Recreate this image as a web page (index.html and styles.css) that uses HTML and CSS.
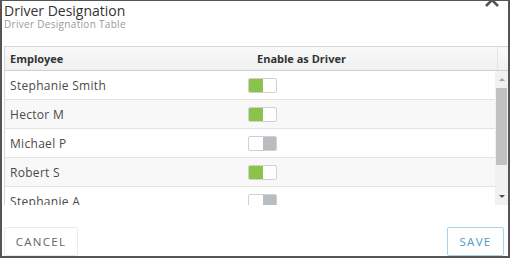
FILE: index.html
```html
<!DOCTYPE html>
<html lang="en">

<head>
    <meta charset="UTF-8">
    <meta name="viewport" content="width=device-width, initial-scale=1.0">
    <title>Driver Designation</title>
    <link rel="stylesheet" href="styles.css">
</head>

<body>
    <div class="modal">
        <button class="close" aria-label="Close">
            <svg width="16" height="16" viewBox="0 0 16 16">
                <path d="M2 2 L14 14 M14 2 L2 14" stroke="#555" stroke-width="2.6" fill="none" />
            </svg>
        </button>

        <div class="head">
            <div class="title">Driver Designation</div>
            <div class="subtitle">Driver Designation Table</div>
        </div>

        <div class="grid">
            <div class="grid-head">
                <div class="col-name">Employee</div>
                <div class="col-toggle">Enable as Driver</div>
                <div class="spacer"></div>
            </div>
            <div class="grid-body">
                <div class="rows">
                    <div class="row">
                        <div class="col-name">Stephanie Smith</div>
                        <div class="col-toggle"><span class="switch on"><i></i><i></i></span></div>
                    </div>
                    <div class="row alt">
                        <div class="col-name">Hector M</div>
                        <div class="col-toggle"><span class="switch on"><i></i><i></i></span></div>
                    </div>
                    <div class="row">
                        <div class="col-name">Michael P</div>
                        <div class="col-toggle"><span class="switch off"><i></i><i></i></span></div>
                    </div>
                    <div class="row alt">
                        <div class="col-name">Robert S</div>
                        <div class="col-toggle"><span class="switch on"><i></i><i></i></span></div>
                    </div>
                    <div class="row">
                        <div class="col-name">Stephanie A</div>
                        <div class="col-toggle"><span class="switch off"><i></i><i></i></span></div>
                    </div>
                </div>
                <div class="scrollbar">
                    <div class="arrow up"></div>
                    <div class="thumb"></div>
                    <div class="track"></div>
                    <div class="arrow down"></div>
                </div>
            </div>
        </div>

        <div class="footer">
            <button class="btn">CANCEL</button>
            <button class="btn save">SAVE</button>
        </div>
    </div>
</body>

</html>
```

FILE: styles.css
```css
body {
    margin: 0;
    padding: 0;
    font-family: "Open Sans", Arial, sans-serif;
    background-color: #fff;
}

.modal {
    position: relative;
    box-sizing: border-box;
    width: 510px;
    height: 258px;
    border: 2px solid #555;
    border-top-width: 1px;
    background-color: #fff;
    display: flex;
    flex-direction: column;
    overflow: hidden;
}

.close {
    position: absolute;
    top: -9px;
    right: 8px;
    padding: 0;
    border: 0;
    background: none;
    line-height: 0;
}

.head {
    padding: 1px 2px 0;
}

.title {
    font-size: 14px;
    line-height: 17px;
    color: #333;
}

.subtitle {
    font-size: 10px;
    line-height: 11px;
    letter-spacing: 0.3px;
    color: #9a9a9a;
}

.grid {
    margin: 16px 0 0 2px;
    border-top: 1px solid #d6d6d6;
    border-left: 1px solid #d6d6d6;
}

.grid-head {
    display: flex;
    height: 23px;
    align-items: center;
    border-bottom: 1px solid #cfcfcf;
    background: linear-gradient(#f9f9f9, #eef0f1);
    font-size: 11px;
    font-weight: bold;
    color: #333;
}

.col-name {
    box-sizing: border-box;
    width: 243px;
    padding-left: 5px;
}

.grid-head .col-toggle {
    flex: 1;
    padding-left: 9px;
}

.spacer {
    width: 10px;
    align-self: stretch;
    border-left: 1px solid #e2e4e5;
}

.grid-body {
    display: flex;
    height: 134px;
}

.rows {
    flex: 1;
    overflow: hidden;
}

.row {
    display: flex;
    align-items: center;
    height: 28px;
    border-bottom: 1px solid #e3e3e3;
    font-size: 12px;
    letter-spacing: 0.3px;
    color: #4a4a4a;
}

.row.alt {
    background-color: #f8f8f8;
}

.switch {
    display: flex;
    box-sizing: border-box;
    width: 29px;
    height: 15px;
    border: 1px solid #d0d0d0;
    border-radius: 2px;
    background-color: #fff;
    overflow: hidden;
}

.switch i {
    flex: 1;
}

.switch.on i:first-child {
    background-color: #8bc34a;
}

.switch.off i:last-child {
    background-color: #b7bdc1;
}

.scrollbar {
    width: 13px;
    display: flex;
    flex-direction: column;
    background-color: #f1f1f1;
}

.arrow {
    height: 17px;
    display: flex;
    align-items: center;
    justify-content: center;
}

.arrow::before {
    content: "";
    border-left: 3px solid transparent;
    border-right: 3px solid transparent;
}

.arrow.up::before {
    border-bottom: 3px solid #a3a3a3;
}

.arrow.down::before {
    border-top: 3px solid #505050;
}

.thumb {
    height: 77px;
    margin: 0 1px;
    background-color: #c1c1c1;
}

.track {
    flex: 1;
}

.footer {
    display: flex;
    justify-content: space-between;
    margin-top: 22px;
    padding: 0 4px 0 2px;
}

.btn {
    height: 29px;
    width: 74px;
    border: 1px solid #ebebeb;
    border-radius: 2px;
    background-color: #fff;
    font-family: "Open Sans", Arial, sans-serif;
    font-size: 11.5px;
    letter-spacing: 1.3px;
    color: #666;
    padding: 0;
}

.btn.save {
    width: 57px;
    border-color: #a9d2e6;
    color: #4b9bcb;
}
```
